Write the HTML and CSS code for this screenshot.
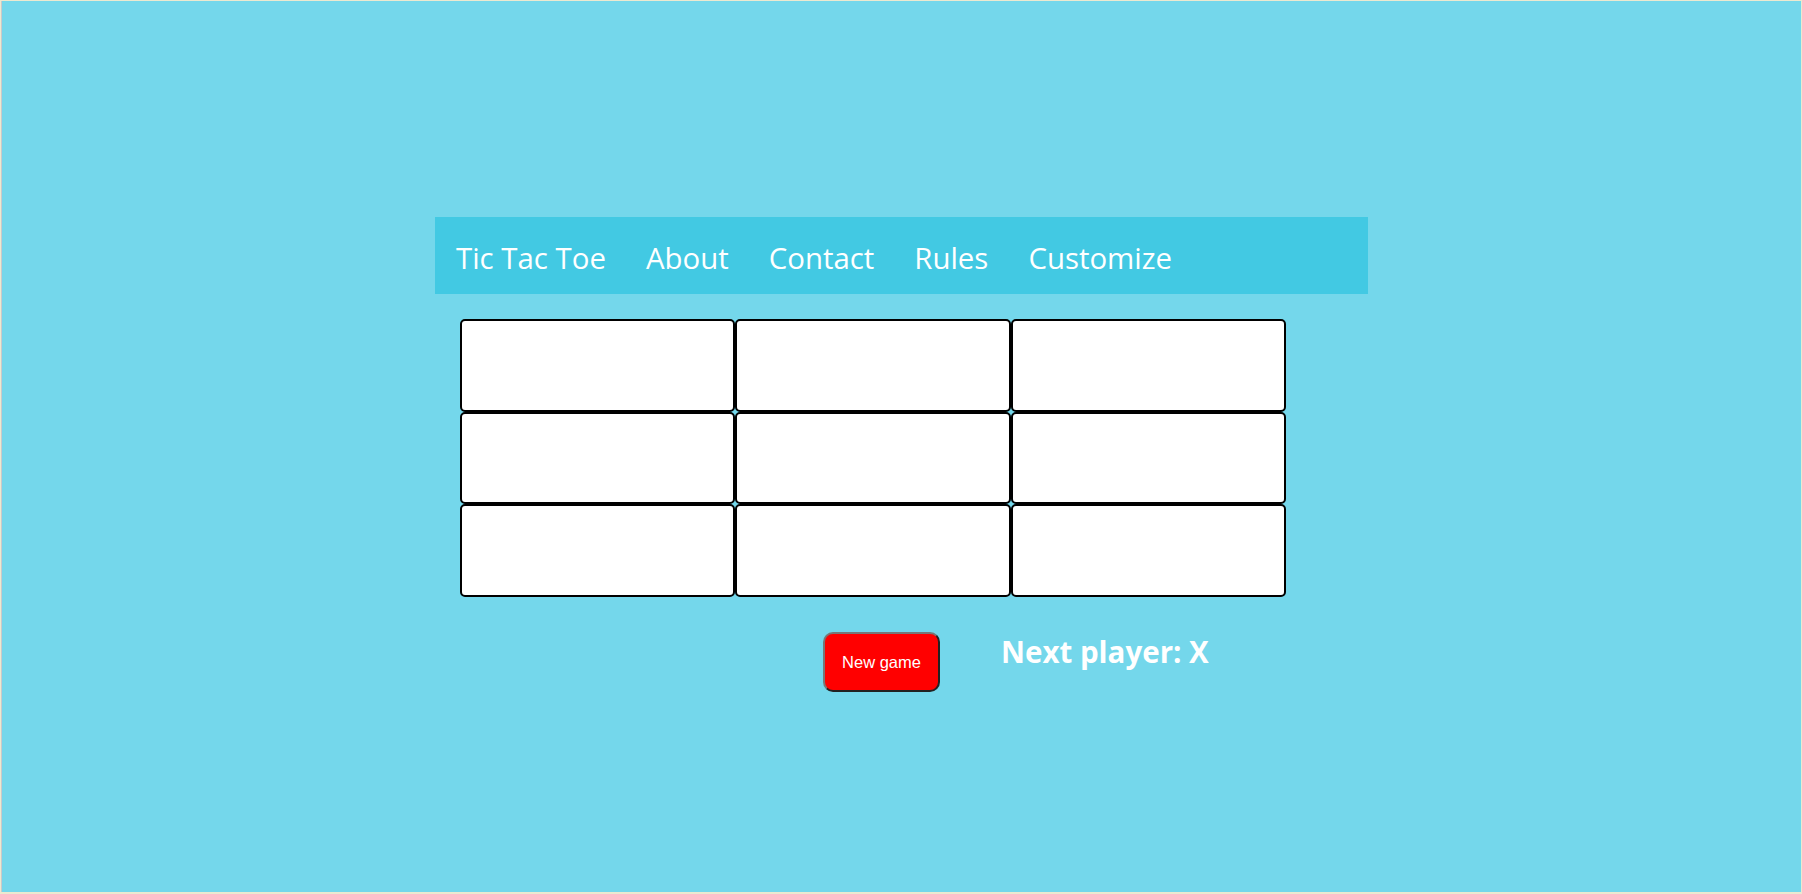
FILE: index.html
```html
<!DOCTYPE html>
<html lang="en">
<head>
<meta charset="utf-8">
<title>Tic Tac Toe</title>
<link rel="stylesheet" href="styles.css">
</head>
<body>
<div class="page">
  <nav class="nav">
    <a class="nav-link" href="#">Tic Tac Toe</a>
    <a class="nav-link" href="#">About</a>
    <a class="nav-link" href="#">Contact</a>
    <a class="nav-link" href="#">Rules</a>
    <a class="nav-link" href="#">Customize</a>
  </nav>
  <main class="main">
    <div class="board">
      <button class="cell"></button>
      <button class="cell"></button>
      <button class="cell"></button>
      <button class="cell"></button>
      <button class="cell"></button>
      <button class="cell"></button>
      <button class="cell"></button>
      <button class="cell"></button>
      <button class="cell"></button>
    </div>
    <div class="controls">
      <button class="new-game">New game</button>
      <h2 class="status">Next player: X</h2>
    </div>
  </main>
</div>
</body>
</html>
```
FILE: styles.css
```css
html, body {
  margin: 0;
  padding: 0;
  background: #ece9d0;
}
.page {
  box-sizing: border-box;
  margin: 1px 1px 0 1px;
  height: 891px;
  background: #74d7eb;
  border-left: 1px solid #c9c9c9;
  padding-top: 216px;
  font-family: "Open Sans", "Noto Sans", sans-serif;
}
.nav {
  width: 933px;
  height: 77px;
  margin: 0 auto;
  background: #42c9e3;
  display: flex;
  align-items: center;
  padding: 4px 0 0 1px;
  box-sizing: border-box;
}
.nav-link {
  color: #ffffff;
  text-decoration: none;
  font-size: 29.4px;
  padding: 0 20px;
}
.main {
  width: 933px;
  margin: 0 auto;
  padding-left: 25px;
  box-sizing: border-box;
}
.board {
  margin-top: 25px;
  width: 826px;
  height: 278px;
  display: grid;
  grid-template-columns: repeat(3, 1fr);
  grid-template-rows: repeat(3, 1fr);
}
.cell {
  background: #ffffff;
  border: 2px solid #000000;
  border-radius: 5px;
  margin: 0;
  padding: 0;
}
.controls {
  display: flex;
  align-items: flex-start;
  margin-top: 35px;
  padding-left: 363px;
  gap: 61px;
}
.new-game {
  width: 117px;
  height: 60px;
  background: #ff0000;
  color: #ffffff;
  font-family: "Liberation Sans", Arial, sans-serif;
  font-size: 16.5px;
  border: 2px solid #555;
  border-top-color: #777;
  border-left-color: #777;
  border-right-color: #222;
  border-bottom-color: #222;
  border-radius: 10px;
  padding: 0;
}
.status {
  margin: 0;
  color: #ffffff;
  font-size: 29.5px;
  font-weight: 700;
  line-height: 1.362;
}
```
